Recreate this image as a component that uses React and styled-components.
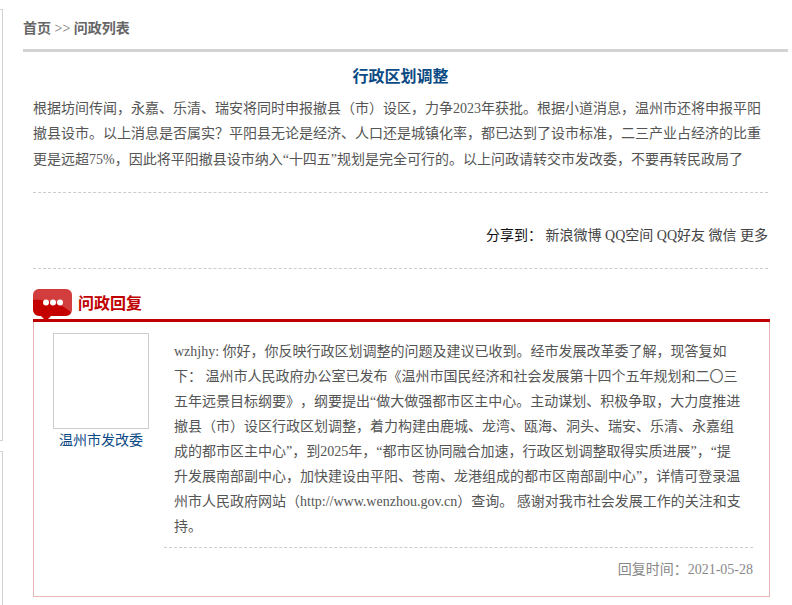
import React from 'react';
import styled, { createGlobalStyle } from 'styled-components';

const Global = createGlobalStyle`
    html, body {
        margin: 0;
        padding: 0;
        background: #fff;
        overflow: hidden;
    }
    body {
        font-family: "Liberation Serif", "Noto Sans CJK SC", serif;
        font-size: 14px;
        color: #555;
        text-spacing-trim: space-all;
    }
`

const Page = styled.div`
    display: flex;
    width: 792px;
    height: 605px;
    overflow: hidden;
`
const Side = styled.div`
    width: 3px;
    margin-right: 20px;
    padding-top: 9px;
    display: flex;
    flex-direction: column;
    gap: 10px;
    flex-shrink: 0;
`
const SideBox = styled.div`
    height: ${props => props.$h};
    flex-shrink: 0;
    border-top: 1px solid #d3d3d3;
    border-right: 1px solid #d3d3d3;
    border-bottom: 1px solid #d3d3d3;
`
const Main = styled.div`
    width: 765px;
`
const Crumb = styled.div`
    height: 49px;
    line-height: 57px;
    border-bottom: 3px solid #d3d3d3;
    font-size: 14px;
    font-weight: bold;
    color: #666;
`
const CrumbSep = styled.span`
    font-weight: normal;
    color: #666;
`
const Content = styled.div`
    padding: 0 20px 0 10px;
`
const Title = styled.h1`
    margin: 0;
    padding-top: 12px;
    height: 32px;
    line-height: 26px;
    font-size: 16px;
    font-weight: bold;
    text-align: center;
    color: #0b4a84;
`
const Question = styled.p`
    margin: 0;
    line-height: 25.4px;
    height: 96px;
    border-bottom: 1px dashed #ccc;
`
const Share = styled.div`
    height: 75px;
    line-height: 86px;
    text-align: right;
    color: #444;
    border-bottom: 1px dashed #ccc;
    b {
        font-weight: normal;
        color: #111;
    }
`
const ReplyHead = styled.div`
    display: flex;
    align-items: flex-start;
    gap: 5px;
    height: 30px;
    margin-top: 20px;
    width: 737px;
    border-bottom: 3px solid #c00000;
`
const ReplyTitle = styled.span`
    font-size: 16px;
    font-weight: bold;
    line-height: 30px;
    color: #c00000;
`
const ReplyBox = styled.div`
    width: 737px;
    height: 275px;
    box-sizing: border-box;
    border: 1px solid #e8b4b4;
    border-top: none;
    display: flex;
    padding: 11px 16px 0 19px;
`
const Person = styled.div`
    width: 96px;
    margin-right: 15px;
    flex-shrink: 0;
    text-align: center;
    color: #0b4a84;
    line-height: 24px;
`
const Photo = styled.div`
    width: 94px;
    height: 94px;
    border: 1px solid #ccc;
`
const Reply = styled.div`
    flex: 1;
`
const ReplyText = styled.p`
    margin: 0;
    padding: 6px 11px 0 10px;
    height: 208px;
    line-height: 25px;
    border-bottom: 1px dashed #ccc;
`
const ReplyDate = styled.div`
    text-align: right;
    line-height: 44px;
    color: #888;
`

const Bubble = () => (
    <svg width="40" height="33" viewBox="0 0 40 33" style={{ flexShrink: 0 }}>
        <path d="M6 0h27a6 6 0 0 1 6 6v15a6 6 0 0 1-6 6H18l-5 5-5-5H6a6 6 0 0 1-6-6V6a6 6 0 0 1 6-6z" fill="#c40000" />
        <path d="M6 0h27a6 6 0 0 1 6 6v18C27 14 14 10 0 11V6a6 6 0 0 1 6-6z" fill="#fff" opacity=".24" />
        <circle cx="13" cy="13.5" r="3" fill="#fff" />
        <circle cx="20" cy="13.5" r="3" fill="#fff" />
        <circle cx="27" cy="13.5" r="3" fill="#fff" />
    </svg>
)

export default function App() {
    return (
        <Page>
            <Global />
            <Side>
                <SideBox $h="430px" />
                <SideBox $h="200px" />
            </Side>
            <Main>
                <Crumb>首页 <CrumbSep>&gt;&gt;</CrumbSep> 问政列表</Crumb>
                <Content>
                    <Title>行政区划调整</Title>
                    <Question>
                        根据坊间传闻，永嘉、乐清、瑞安将同时申报撤县（市）设区，力争2023年获批。根据小道消息，温州市还将申报平阳撤县设市。以上消息是否属实？平阳县无论是经济、人口还是城镇化率，都已达到了设市标准，二三产业占经济的比重更是远超75%，因此将平阳撤县设市纳入“十四五”规划是完全可行的。以上问政请转交市发改委，不要再转民政局了
                    </Question>
                    <Share><b>分享到：</b> 新浪微博 QQ空间 QQ好友 微信 更多</Share>
                    <ReplyHead>
                        <Bubble />
                        <ReplyTitle>问政回复</ReplyTitle>
                    </ReplyHead>
                    <ReplyBox>
                        <Person>
                            <Photo />
                            温州市发改委
                        </Person>
                        <Reply>
                            <ReplyText>
                                wzhjhy: 你好，你反映行政区划调整的问题及建议已收到。经市发展改革委了解，现答复如下： 温州市人民政府办公室已发布《温州市国民经济和社会发展第十四个五年规划和二〇三五年远景目标纲要》，纲要提出“做大做强都市区主中心。主动谋划、积极争取，大力度推进撤县（市）设区行政区划调整，着力构建由鹿城、龙湾、瓯海、洞头、瑞安、乐清、永嘉组成的都市区主中心”，到2025年，“都市区协同融合加速，行政区划调整取得实质进展”，“提升发展南部副中心，加快建设由平阳、苍南、龙港组成的都市区南部副中心”，详情可登录温州市人民政府网站（http://www.wenzhou.gov.cn）查询。 感谢对我市社会发展工作的关注和支持。
                            </ReplyText>
                            <ReplyDate>回复时间：2021-05-28</ReplyDate>
                        </Reply>
                    </ReplyBox>
                </Content>
            </Main>
        </Page>
    );
}
